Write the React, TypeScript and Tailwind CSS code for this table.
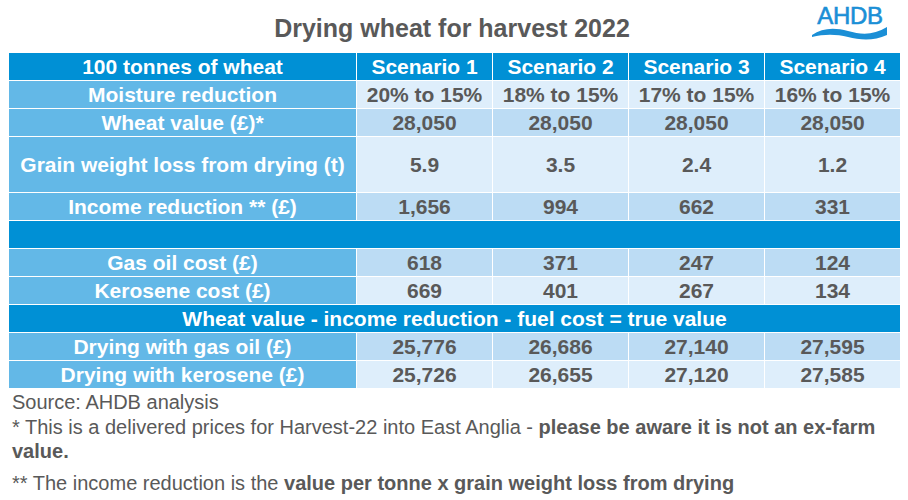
const rows = [
  { label: 'Moisture reduction', values: ['20% to 15%', '18% to 15%', '17% to 15%', '16% to 15%'], light: true },
  { label: 'Wheat value (£)*', values: ['28,050', '28,050', '28,050', '28,050'], light: false },
  { label: 'Grain weight loss from drying (t)', values: ['5.9', '3.5', '2.4', '1.2'], light: true, tall: true },
  { label: 'Income reduction ** (£)', values: ['1,656', '994', '662', '331'], light: false },
];

const fuelRows = [
  { label: 'Gas oil cost (£)', values: ['618', '371', '247', '124'], light: false },
  { label: 'Kerosene cost (£)', values: ['669', '401', '267', '134'], light: true },
];

const resultRows = [
  { label: 'Drying with gas oil (£)', values: ['25,776', '26,686', '27,140', '27,595'], light: false },
  { label: 'Drying with kerosene (£)', values: ['25,726', '26,655', '27,120', '27,585'], light: true },
];

type Row = { label: string; values: string[]; light: boolean; tall?: boolean };

function DataRow({ row }: { row: Row }) {
  const h = row.tall ? 'h-[55px] row-span-2' : 'h-[27px]';
  const bg = row.light ? 'bg-[#deeefb]' : 'bg-[#bcdcf4]';
  return (
    <>
      <div className={`${h} bg-[#63b8e7] text-white flex items-center justify-center`}>{row.label}</div>
      {row.values.map((v, i) => (
        <div key={i} className={`${h} ${bg} text-[#595959] flex items-center justify-center`}>
          {v}
        </div>
      ))}
    </>
  );
}

function Logo() {
  return (
    <div className="flex flex-col items-center w-[76px]">
      <span className="text-[24px] leading-[27px] text-[#1b8fd6] tracking-[-0.3px] [-webkit-text-stroke:0.6px_#1b8fd6]">
        AHDB
      </span>
      <svg width="76" height="13" viewBox="0 0 76 13" className="-mt-[2px]">
        <path
          d="M0 8 C10 1 22 0 36 4 C50 8 62 8 75 0 L75 8 C62 14 48 13 36 10 C24 7 12 7 0 10 Z"
          fill="#1b8fd6"
        />
      </svg>
    </div>
  );
}

export default function App() {
  return (
    <div className="w-[908px] h-[500px] bg-white font-['Liberation_Sans',Arial,sans-serif] overflow-hidden">
      <div className="grid grid-cols-[1fr_auto_1fr] h-[53px]">
        <div />
        <h1 className="text-[25px] leading-[30px] font-bold text-[#595959] pt-[13px] pr-[4px]">
          Drying wheat for harvest 2022
        </h1>
        <div className="flex justify-end pr-[20px] pt-[2px]">
          <Logo />
        </div>
      </div>

      <div className="mx-[9px] grid grid-cols-[347px_repeat(4,135px)] gap-px bg-white text-[21px] font-bold leading-none">
        <div className="h-[27px] bg-[#0090d5] text-white flex items-center justify-center">100 tonnes of wheat</div>
        {['Scenario 1', 'Scenario 2', 'Scenario 3', 'Scenario 4'].map((s) => (
          <div key={s} className="h-[27px] bg-[#0090d5] text-white flex items-center justify-center">
            {s}
          </div>
        ))}

        {rows.map((r) => (
          <DataRow key={r.label} row={r} />
        ))}

        <div className="col-span-5 h-[27px] bg-[#0090d5]" />

        {fuelRows.map((r) => (
          <DataRow key={r.label} row={r} />
        ))}

        <div className="col-span-5 h-[27px] bg-[#0090d5] text-white flex items-center justify-center">
          Wheat value - income reduction - fuel cost = true value
        </div>

        {resultRows.map((r) => (
          <DataRow key={r.label} row={r} />
        ))}
      </div>

      <div className="pl-[12px] pr-[20px] text-[20px] text-[#595959]">
        <p className="leading-[26px] pt-[1px]">Source: AHDB analysis</p>
        <p className="leading-[24px]">
          * This is a delivered prices for Harvest-22 into East Anglia -{' '}
          <span className="font-bold">please be aware it is not an ex-farm</span>
          <br />
          <span className="font-bold">value.</span>
        </p>
        <p className="leading-[24px] mt-[8px]">
          ** The income reduction is the{' '}
          <span className="font-bold">value per tonne x grain weight loss from drying</span>
        </p>
      </div>
    </div>
  );
}
